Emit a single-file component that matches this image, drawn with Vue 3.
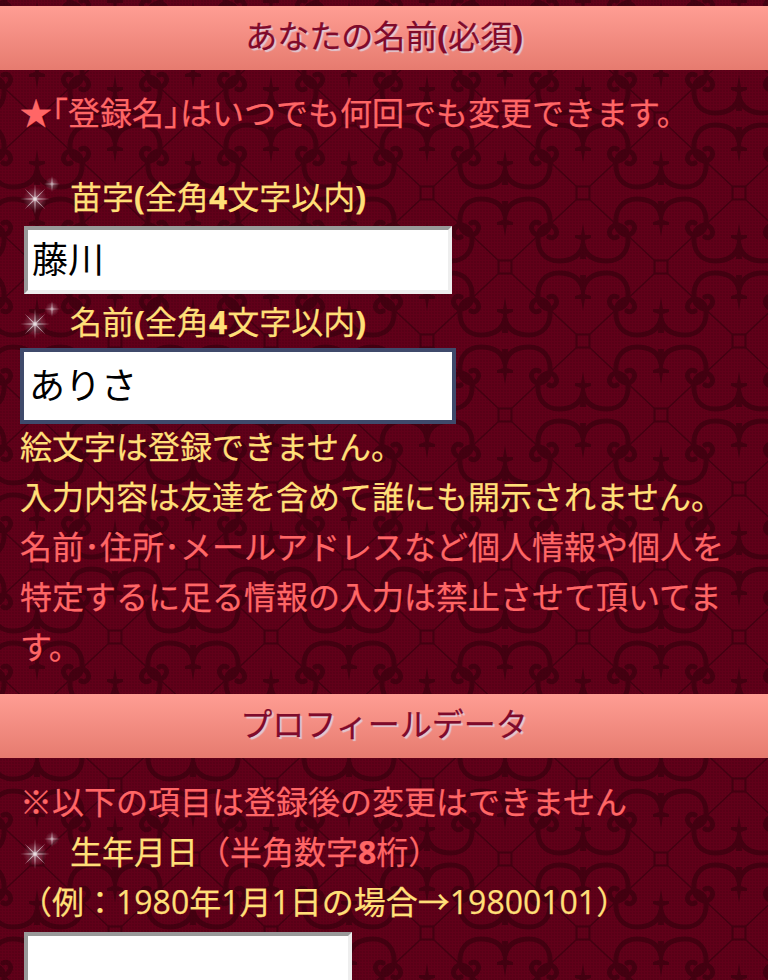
<script setup>
const rays = [0, 45, 90, 135, 180, 225, 270, 315]
</script>

<template>
  <div class="page">
    <svg class="defs" width="0" height="0" aria-hidden="true">
      <defs>
        <radialGradient id="glow">
          <stop offset="0" stop-color="#fff" stop-opacity="0.75" />
          <stop offset="0.35" stop-color="#e8d0d8" stop-opacity="0.3" />
          <stop offset="1" stop-color="#e8d0d8" stop-opacity="0" />
        </radialGradient>
        <g id="spark" opacity="0.88">
          <circle cx="13" cy="20" r="12" fill="url(#glow)" />
          <polygon
            v-for="a in rays"
            :key="a"
            points="12.2,20 13,5 13.8,20"
            fill="#d8c4cc"
            :transform="`rotate(${a} 13 20)`"
          />
          <circle cx="13" cy="20" r="1.8" fill="#fff" />
          <circle cx="30" cy="5" r="7" fill="url(#glow)" />
          <polygon points="29.4,5 30,-3 30.6,5" fill="#d8c4cc" />
          <polygon points="29.4,5 30,13 30.6,5" fill="#d8c4cc" />
          <polygon points="30,4.4 22,5 30,5.6" fill="#d8c4cc" />
          <polygon points="30,4.4 38,5 30,5.6" fill="#d8c4cc" />
        </g>
      </defs>
    </svg>

    <h2 class="bar first">あなたの名前<b>(</b>必須<b>)</b></h2>
    <div class="block top">
      <p class="pink">★<span class="halt">「</span>登録名<span class="halt">」</span>はいつでも何回でも変更できます。</p>

      <label class="label yellow gap-a">
        <svg class="spark" width="38" height="38" viewBox="0 -1 38 38"><use href="#spark" /></svg>
        <span>苗字<b>(</b>全角<b>4</b>文字以内<b>)</b></span>
      </label>
      <input class="field wide" type="text" value="藤川" />

      <label class="label yellow gap-b">
        <svg class="spark" width="38" height="38" viewBox="0 -1 38 38"><use href="#spark" /></svg>
        <span>名前<b>(</b>全角<b>4</b>文字以内<b>)</b></span>
      </label>
      <input class="field wide focused" type="text" value="ありさ" />

      <div class="notes">
        <p class="yellow">絵文字は登録できません。</p>
        <p class="yellow">入力内容は友達を含めて誰にも開示されません。</p>
        <p class="pink">名前･住所･メールアドレスなど個人情報や個人を特定するに足る情報の入力は禁止させて頂いてます。</p>
      </div>
    </div>

    <h2 class="bar second">プロフィールデータ</h2>
    <div class="block bottom">
      <p class="pink">※以下の項目は登録後の変更はできません</p>
      <label class="label yellow">
        <svg class="spark" width="38" height="38" viewBox="0 -1 38 38"><use href="#spark" /></svg>
        <span>生年月日<span class="pink">（半角数字<b>8</b>桁）</span></span>
      </label>
      <p class="yellow example">（例：1980年1月1日の場合→19800101）</p>
      <input class="field narrow" type="text" />
    </div>
  </div>
</template>

<style scoped>
.page {
  height: 980px;
  overflow: hidden;
  font-family: "Open Sans", "Noto Sans CJK JP", sans-serif;
  font-size: 32px;
  line-height: 50px;
  -webkit-text-stroke: 0.25px;
  background-color: #610019;
  background-image:
    radial-gradient(circle at 1px 1px, rgba(30, 0, 8, 0.12) 0.9px, transparent 1px),
    url("data:image/svg+xml,<svg xmlns='http://www.w3.org/2000/svg' xmlns:xlink='http://www.w3.org/1999/xlink' width='156' height='148' viewBox='0 0 156 148'><defs><g id='q' fill='none' stroke='%23450011' stroke-width='5' stroke-linecap='round'><path d='M0,-22 C3,-11 12,-6 24,-6 C38,-6 46,-16 45,-30 C44,-41 33,-45 28,-39 C24,-33 29,-27 34,-30'/></g><g id='sp' fill='%23450011'><path d='M-3,-8 L-2,-27 L-8,-29 L-8,-32 L-2,-32 L0,-44 L2,-32 L8,-32 L8,-29 L2,-27 L3,-8 Z'/></g><g id='hf'><use xlink:href='%23q'/><use xlink:href='%23q' transform='scale(-1 1)'/><use xlink:href='%23sp'/></g><g id='m'><use xlink:href='%23hf'/><use xlink:href='%23hf' transform='scale(1 -1)'/></g><rect id='s' x='-6.5' y='-6.5' width='13' height='13' fill='none' stroke='%23450011' stroke-width='2.2'/></defs><path d='M71.5,6.5 L6.5,67.5 M84.5,6.5 L149.5,67.5 M6.5,80.5 L71.5,141.5 M149.5,80.5 L84.5,141.5' fill='none' stroke='%23450011' stroke-width='1.6'/><use xlink:href='%23s' x='78' y='0'/><use xlink:href='%23s' x='78' y='148'/><use xlink:href='%23s' x='0' y='74'/><use xlink:href='%23s' x='156' y='74'/><use xlink:href='%23m' x='0' y='0'/><use xlink:href='%23m' x='156' y='0'/><use xlink:href='%23m' x='0' y='148'/><use xlink:href='%23m' x='156' y='148'/><use xlink:href='%23m' x='78' y='74'/></svg>");
  background-size: 3px 3px, 156px 148px;
  background-position: 0 0, 37px 45px;
}

.defs {
  display: block;
  height: 0;
}

p {
  margin: 0;
}

b {
  font-weight: 700;
}

.bar {
  margin: 0;
  height: 64px;
  line-height: 60px;
  text-align: center;
  font-size: 32px;
  font-weight: 400;
  color: #7f0a2b;
  text-shadow: 2px 2px 1px rgba(222, 222, 238, 0.75);
  background: linear-gradient(#ff9d93, #e67b6f);
}

.first {
  margin-top: 6px;
}

.second {
  margin-top: 22px;
}

.block {
  padding: 0 20px;
}

.top {
  padding-top: 18px;
}

.bottom {
  padding-top: 19px;
}

.pink {
  color: #ff6666;
}

.yellow {
  color: #ffdf78;
}

.halt {
  font-feature-settings: "halt";
}

.label {
  display: flex;
  align-items: center;
  gap: 10px;
}

.gap-a {
  margin-top: 34px;
  margin-bottom: 4px;
}

.gap-b {
  margin-top: 3px;
  margin-bottom: 5px;
}

.spark {
  flex: none;
  margin-left: 2px;
  overflow: visible;
}

.field {
  display: block;
  box-sizing: border-box;
  height: 68px;
  margin: 0 0 0 4px;
  padding: 0 2px 6px 4px;
  font-family: "Noto Sans CJK JP", sans-serif;
  font-size: 36px;
  -webkit-text-stroke: 0;
  color: #000;
  background: #fff;
  border-style: solid;
  border-width: 4px;
  border-color: #999 #eee #eee #999;
  border-radius: 0;
}

.wide {
  width: 428px;
}

.narrow {
  width: 328px;
  margin-top: 5px;
}

.focused {
  padding-left: 1px;
  border-color: #fff;
  outline: 4px solid #3f4a6b;
}

.notes {
  margin-top: 2px;
}
</style>
